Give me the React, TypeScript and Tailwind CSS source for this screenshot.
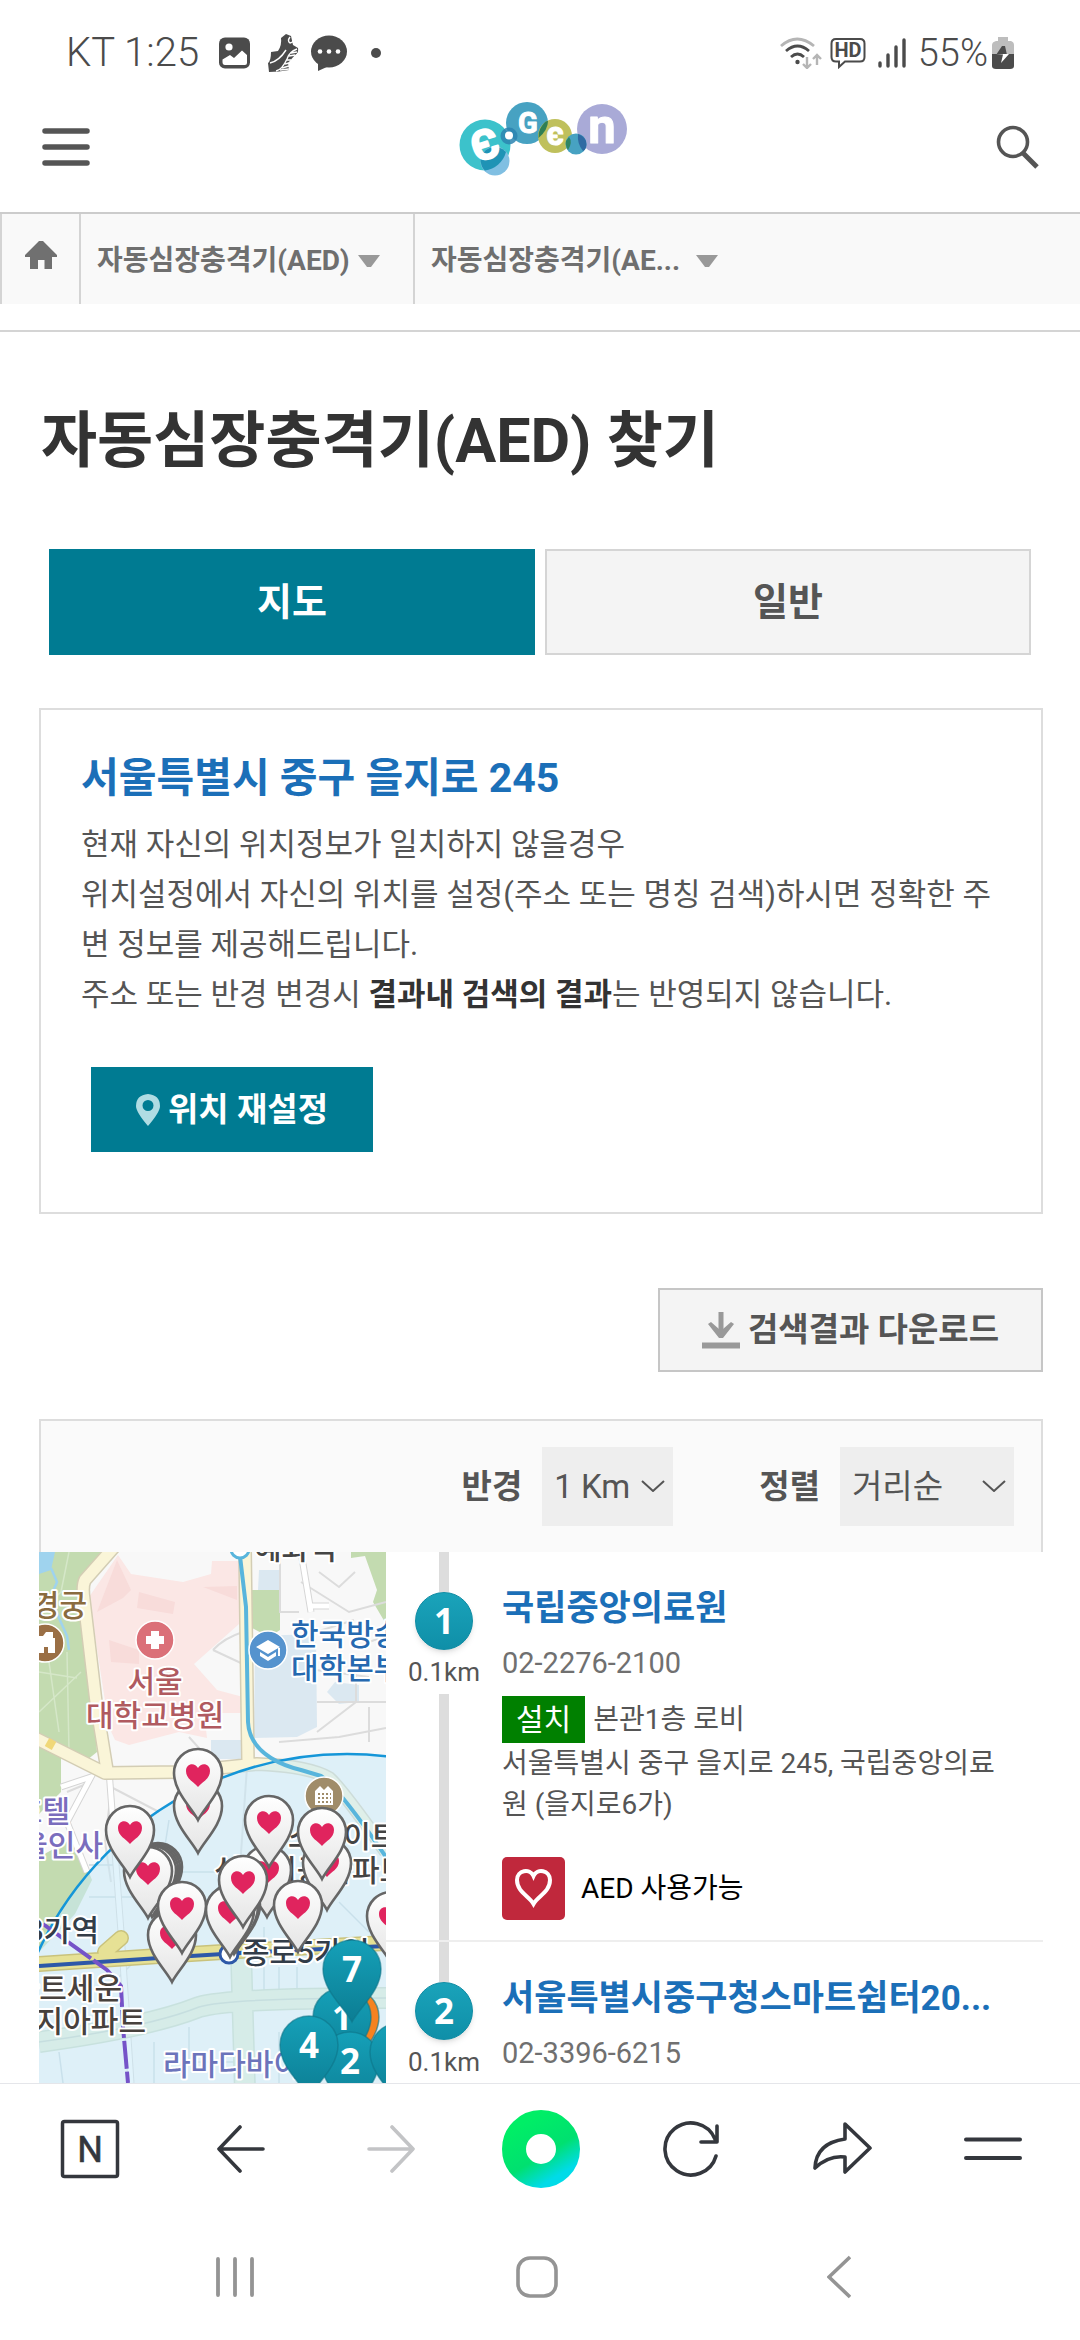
import type { ReactNode } from "react";

interface IPin {
  x: number;
  y: number;
}

interface INumberPin extends IPin {
  label: string;
  color?: string;
}

interface IPlace {
  no: number;
  distance: string;
  name: string;
  phone: string;
  spot: string;
  address: string;
}

const places: IPlace[] = [
  {
    no: 1,
    distance: "0.1km",
    name: "국립중앙의료원",
    phone: "02-2276-2100",
    spot: "본관1층 로비",
    address: "서울특별시 중구 을지로 245, 국립중앙의료원 (을지로6가)",
  },
  {
    no: 2,
    distance: "0.1km",
    name: "서울특별시중구청스마트쉼터20...",
    phone: "02-3396-6215",
    spot: "스마트쉼터",
    address: "서울특별시 중구 을지로",
  },
];

// x, y is the tip of each pin
const heartPins: IPin[] = [
  { x: 159, y: 301 },
  { x: 159, y: 268 },
  { x: 119, y: 362 },
  { x: 117, y: 363 },
  { x: 115, y: 364 },
  { x: 113, y: 365 },
  { x: 109, y: 366 },
  { x: 91, y: 325 },
  { x: 133, y: 430 },
  { x: 143, y: 401 },
  { x: 228, y: 365 },
  { x: 230, y: 315 },
  { x: 197, y: 400 },
  { x: 195, y: 402 },
  { x: 191, y: 405 },
  { x: 204, y: 375 },
  { x: 288, y: 358 },
  { x: 283, y: 327 },
  { x: 259, y: 400 },
  { x: 352, y: 411 },
];

const numberPins: INumberPin[] = [
  { x: 311, y: 518, label: "", color: "#f58220" },
  { x: 303, y: 518, label: "1" },
  { x: 313, y: 470, label: "7" },
  { x: 311, y: 562, label: "2" },
  { x: 360, y: 553, label: "3" },
  { x: 270, y: 546, label: "4" },
];

const StatusBar = () => {
  return (
    <div className="flex h-[94px] items-center justify-between pt-3 pr-[66px] pl-[66px] text-[#4b4b4b]">
      <div className="flex items-center">
        <span className="text-[40px] leading-10 font-light">KT 1:25</span>
        <svg className="ml-5 h-8 w-8" viewBox="0 0 32 32">
          <rect width="31" height="31" y="0.5" rx="6" fill="currentColor" />
          <circle cx="10" cy="10" r="3.6" fill="#fff" />
          <path d="M3.500 22.500 L11 18 L15 21 L23 13.500 L28 18 V26 Q28 28 26 28 H6 Q3.500 28 3.500 25 Z" fill="#fff" />
        </svg>
        <svg className="ml-4 h-10 w-8" viewBox="0 0 32 40">
          <path d="M14 5 L19 1 L24 3 L26 12 L31 15 Q32 20 28 22 L21 30 L22 37 Q12 39 2 39 L1 30 Q4 28 4 19 L11 18 Q15 12 14 5 Z" fill="currentColor" />
          <path d="M30 16 Q22 19 20 26 Q15 37 9 38 M26 4 Q28 9 23 10 Q20 8 23 4 M3 30 Q12 28 19 17" fill="none" stroke="#fff" strokeWidth="1.400" />
          <path d="M24 20 L30 19 M22 23 L28 22 M20 27 L24 27 M18 31 L22 30 M15 35 L22 33 M13 37 L22 36" stroke="#fff" strokeWidth="1.600" />
        </svg>
        <svg className="ml-3 h-9 w-9" viewBox="0 0 36 36">
          <ellipse cx="18" cy="16.500" rx="18" ry="16" fill="currentColor" />
          <path d="M7 27 L7 36 L18 31 Z" fill="currentColor" />
          <circle cx="9" cy="16.500" r="2.300" fill="#fff" />
          <circle cx="18" cy="16.500" r="2.300" fill="#fff" />
          <circle cx="27" cy="16.500" r="2.300" fill="#fff" />
        </svg>
        <span className="ml-6 h-[10px] w-[10px] rounded-full bg-[#4b4b4b]" />
      </div>
      <div className="flex items-center">
        <svg className="h-8 w-[42px]" viewBox="0 0 42 32" fill="none" strokeWidth="2.800">
          <path d="M1 9 Q17 -5 34 9" stroke="#b5b5b5" />
          <path d="M6 14 Q17.500 4 29 14" stroke="currentColor" />
          <path d="M11 20 Q17.500 14 24 20" stroke="currentColor" />
          <circle cx="17.500" cy="25" r="2.200" fill="currentColor" />
          <path d="M27 20 V30 M23 27 L27 31 L31 27 M37 28 V18 M33 22 L37 18 L41 22" stroke="#b5b5b5" strokeWidth="2.400" />
        </svg>
        <svg className="ml-2 h-8 w-9" viewBox="0 0 36 32">
          <path d="M6 2 H30 Q34.500 2 34.500 6.500 V20 Q34.500 24.500 30 24.500 H15 L9 30 V24.500 H6 Q1.500 24.500 1.500 20 V6.500 Q1.500 2 6 2 Z" fill="none" stroke="currentColor" strokeWidth="2" />
          <text x="18" y="20" textAnchor="middle" fontSize="20" fontWeight="700" fill="currentColor">HD</text>
        </svg>
        <svg className="ml-3 h-8 w-7" viewBox="0 0 28 32" stroke="currentColor" strokeWidth="3.400" strokeLinecap="round">
          <path d="M2 26 V29 M10 18 V29 M18 10 V29 M26 3 V29" />
        </svg>
        <span className="ml-3 text-[38px] leading-10 font-light">55%</span>
        <svg className="ml-1 h-[34px] w-[22px]" viewBox="0 0 22 34">
          <path d="M6 1 H16 V5 H19 Q22 6 22 9 V19 H0 V9 Q0 6 4 5 H6 Z" fill="#bdbdbd" />
          <path d="M0 18 H22 V30 Q22 33 18 33 H4 Q0 33 0 30 Z" fill="currentColor" />
          <path d="M10 10 L4 19 H15 L13 10 Z" fill="currentColor" />
          <path d="M4 18.500 H11 L9 27 L17 18 H11" fill="#fff" />
        </svg>
      </div>
    </div>
  );
};

const Logo = () => {
  return (
    <svg className="h-[94px] w-[168px]" viewBox="0 0 168 94" role="img" aria-label="E-Gen">
      <circle cx="26" cy="45" r="25.500" fill="#3cc2cb" />
      <circle cx="36" cy="61" r="14.500" fill="#80bfe2" />
      <path d="M21.500 61 A14.500 14.500 0 0 1 47 52 A25.500 25.500 0 0 1 26 70.500 Q23 69 21.500 61 Z" fill="#1f93b5" />
      <circle cx="68" cy="23" r="21" fill="#47a2c2" />
      <circle cx="50" cy="36" r="8.500" fill="#2b84b0" fillOpacity="0.850" />
      <circle cx="96" cy="36" r="17" fill="#bfc05c" />
      <path d="M81 29 Q86 20 89 21 Q89 30 79.500 38 Q79 33 81 29 Z" fill="#2f7f55" />
      <circle cx="143" cy="29" r="25" fill="#a9aad7" />
      <circle cx="117" cy="44" r="10.500" fill="#47a2c2" />
      <path d="M119 34 Q128 37 127.500 45 Q127 50 124 51 Q118 44 119 34 Z" fill="#2f6aa3" />
      <path d="M110 37 Q114 42 109 50 Q106 45 107 41 Z" fill="#2f8564" />
      <circle cx="50" cy="35.500" r="4" fill="#fff" />
      <g fill="#fff" stroke="#fff" strokeLinejoin="round" fontFamily="Roboto, sans-serif" fontWeight="700" textAnchor="middle">
        <text x="26" y="59" fontSize="41" strokeWidth="2" transform="rotate(-18 26 45)">Є</text>
        <text x="69" y="33" fontSize="29" strokeWidth="1">G</text>
        <text x="96" y="45" fontSize="33" strokeWidth="1">є</text>
        <text x="143" y="43" fontSize="49" strokeWidth="1">n</text>
      </g>
    </svg>
  );
};

const Header = () => {
  return (
    <header className="flex h-[118px] items-center justify-between pr-10 pb-3 pl-[42px] text-[#555]">
      <button type="button" aria-label="menu">
        <svg className="h-10 w-12" viewBox="0 0 48 40" stroke="currentColor" strokeWidth="5.500" strokeLinecap="round">
          <path d="M3 4 H45 M3 20 H45 M3 36 H45" />
        </svg>
      </button>
      <a href="#home">
        <Logo />
      </a>
      <button type="button" aria-label="search">
        <svg className="h-11 w-11" viewBox="0 0 44 44" fill="none" stroke="currentColor" strokeWidth="3.600">
          <circle cx="17" cy="17" r="14.500" />
          <path d="M27 28 L41 42" strokeWidth="5" />
        </svg>
      </button>
    </header>
  );
};

const Caret = () => (
  <svg className="h-3 w-[22px]" viewBox="0 0 22 12">
    <path d="M0 0 H22 L13 12 H9 Z" fill="#999" />
  </svg>
);

const Breadcrumb = () => {
  return (
    <nav className="flex h-[90px] bg-[#f9f9f9] text-[28px] font-bold text-[#6f6f6f]">
      <a href="#home" aria-label="home" className="flex w-[79px] items-center justify-center border-l-2 border-[#d4d4d4] pb-2">
        <svg className="h-7 w-8" viewBox="0 0 32 28">
          <path d="M14 0 H18 L32 14 V16 H27 V28 H19.500 V19 H13 V28 H5 V16 H0 V14 Z" fill="#707070" />
        </svg>
      </a>
      <button type="button" className="flex w-[334px] items-center gap-2 border-l-2 border-[#d4d4d4] pt-1 pl-4">
        자동심장충격기(AED)
        <Caret />
      </button>
      <button type="button" className="flex items-center gap-4 border-l-2 border-[#d4d4d4] pt-1 pl-4">
        자동심장충격기(AE...
        <Caret />
      </button>
    </nav>
  );
};

const LocationCard = () => {
  return (
    <section className="mt-[53px] border-2 border-[#ddd] px-10 pt-[38px] pb-[60px]">
      <h2 className="text-[41px] leading-[60px] font-bold text-[#1b6fb8]">서울특별시 중구 을지로 245</h2>
      <p className="mt-3 text-[31px] leading-[50px] break-all text-[#555]">
        현재 자신의 위치정보가 일치하지 않을경우
        <br />
        위치설정에서 자신의 위치를 설정(주소 또는 명칭 검색)하시면 정확한 주변 정보를 제공해드립니다.
        <br />
        주소 또는 반경 변경시 <strong className="text-[#333]">결과내 검색의 결과</strong>는 반영되지 않습니다.
      </p>
      <button type="button" className="mt-[47px] ml-[10px] flex h-[85px] items-center gap-2 bg-[#007b92] px-[45px] text-[33px] font-bold text-white">
        <svg className="h-8 w-6" viewBox="0 0 24 32">
          <path fillRule="evenodd" d="M12 0 Q24 1 24 12 Q24 18 12 32 Q0 18 0 12 Q0 1 12 0 Z M12 6 A5.500 5.500 0 1 0 12 17 A5.500 5.500 0 1 0 12 6 Z" fill="#b0dce3" />
        </svg>
        위치 재설정
      </button>
    </section>
  );
};

interface ISelectProps {
  id: string;
  label: string;
  className: string;
  children: ReactNode;
}

const FilterSelect = ({ id, label, className, children }: ISelectProps) => {
  return (
    <div className="flex items-center gap-5">
      <label htmlFor={id} className="text-[33px] font-bold">{label}</label>
      <div className="relative">
        <select id={id} className={`h-[79px] appearance-none bg-[#eee] pl-3 text-[33px] ${className}`}>
          {children}
        </select>
        <svg className="pointer-events-none absolute top-[33px] right-2 h-3 w-6" viewBox="0 0 24 12" fill="none" stroke="#555" strokeWidth="2">
          <path d="M1 1 L12 11 L23 1" />
        </svg>
      </div>
    </div>
  );
};

const HeartPin = ({ x, y }: IPin) => (
  <g transform={`translate(${x} ${y})`}>
    <path d="M0 0 C-6 -12 -24 -28 -24 -47 A24 24 0 0 1 24 -47 C24 -28 6 -12 0 0 Z" fill="url(#pin)" stroke="#666" strokeWidth="2.600" />
    <path d="M0 -33 C-4 -38 -12 -41 -12 -49 C-12 -57 -3 -58 0 -52 C3 -58 12 -57 12 -49 C12 -41 4 -38 0 -33 Z" fill="#e0245e" />
  </g>
);

const NumberPin = ({ x, y, label, color }: INumberPin) => (
  <g transform={`translate(${x} ${y})`}>
    <path d="M0 0 C-7 -14 -29 -31 -29 -53 A29 29 0 0 1 29 -53 C29 -31 7 -14 0 0 Z" fill={color ?? "url(#teal)"} stroke="#0d7489" strokeOpacity="0.600" strokeWidth="1.500" />
    <text y="-40" textAnchor="middle" fontSize="35" fontWeight="700" fill="#fff" fontFamily="Open Sans, sans-serif">{label}</text>
  </g>
);

const MapView = () => {
  return (
    <svg className="h-[531px] w-[347px] shrink-0" viewBox="0 0 347 531" role="img" aria-label="지도">
      <defs>
        <linearGradient id="pin" x1="0" y1="0" x2="0" y2="1">
          <stop offset="0" stopColor="#fff" />
          <stop offset="1" stopColor="#e4e4e4" />
        </linearGradient>
        <linearGradient id="teal" x1="0" y1="0" x2="0" y2="1">
          <stop offset="0" stopColor="#15a0b8" />
          <stop offset="1" stopColor="#0c7d93" />
        </linearGradient>
      </defs>
      <rect width="347" height="531" fill="#f8f8f8" />

      {/* parks and water */}
      <path d="M0 0 H75 L44 33 L58 200 L48 208 L0 185 Z M0 192 L22 204 L22 240 L0 262 Z M0 305 L36 285 L53 328 L36 362 L0 400 Z M212 38 H241 V78 L230 85 L213 76 Z M312 0 H347 V72 L334 50 L338 38 L326 4 L312 6 Z" fill="#c3dbb0" />
      <path d="M0 60 L22 40 L30 0 M0 120 L38 126 M10 110 L20 180 M0 160 L42 120 M28 100 L30 200" stroke="#d5e7c8" strokeWidth="1.500" fill="none" />
      <path d="M0 0 H16 L12 18 L0 22 Z" fill="#9fd3ee" />
      <path d="M12 16 L18 30 L12 44 L20 66 L28 84 L30 98" stroke="#9fd3ee" strokeWidth="2.500" fill="none" />

      {/* blocks */}
      <path d="M79 3 L92 22 L144 30 L172 22 L173 9 H200 V72 L155 112 L178 138 L204 145 V161 H165 L168 186 L140 180 L90 193 L76 188 L70 175 L50 45 Z" fill="#fbe7e5" />
      <path d="M78 8 L92 38 L84 46 L58 60 M100 40 L136 50 L134 62 L98 56 Z M148 50 L156 72 M70 88 L100 98 L100 112 L72 110 M80 150 L110 160 M164 35 L198 34 V48 Z" fill="#f8dcda" />
      <path d="M220 18 H241 V38 H219 Z M216 84 L277 82 L278 175 L258 185 L215 186 Z M172 188 H202 V207 H172 Z M296 130 L320 133 V150 L300 152 L288 140 Z" fill="#dbe8f1" />

      {/* small streets */}
      <g fill="none" stroke="#dcdcdc" strokeWidth="2">
        <path d="M241 0 V60 H260 M277 80 L315 68 M277 118 L330 125 M278 180 L317 150 V115 M278 150 H347 M330 90 L347 84 M262 30 L310 60 L347 50 M240 190 L300 185 L347 176 M330 155 V190 M72 215 V240 L66 290 L72 330 M72 235 L120 260 M28 240 L52 230 M208 215 L200 330 M150 185 L168 205 M174 98 Q185 86 204 80 M174 98 L204 112 M280 20 L300 35 L316 20" />
        <path d="M50 313 H90 M50 345 H110 M130 268 L125 300 L140 320 H200 M215 300 V360 M300 350 L330 380 M225 375 V440 M240 415 V440 M258 415 V440 M300 470 V531 M150 475 V510 H200 M115 490 V531 M20 500 L24 531 M240 480 V531 M78 400 L95 410 L80 425" stroke="#c9d6dc" strokeWidth="1.500" />
      </g>
      <path d="M262 0 L272 60 M272 54 H290 M70 218 L82 380 L92 531 M22 235 L52 225 L28 270 L48 320" fill="none" stroke="#d5d5d5" strokeWidth="7" />
      <path d="M262 0 L272 60 M272 54 H290 M70 218 L82 380 L92 531 M22 235 L52 225 L28 270 L48 320" fill="none" stroke="#fff" strokeWidth="5" />

      {/* main roads */}
      <g fill="none" strokeLinejoin="round">
        <path d="M76 -6 L46 28 Q43 34 45 48 L57 150 L68 218 M-4 186 L66 221 L140 220 L218 212 Q270 214 290 226 Q302 236 347 300 M206 -4 L209 212" stroke="#d3cdb4" strokeWidth="14" />
        <path d="M76 -6 L46 28 Q43 34 45 48 L57 150 L68 218 M-4 186 L66 221 L140 220 L218 212 Q270 214 290 226 Q302 236 347 300 M206 -4 L209 212" stroke="#faf5d8" strokeWidth="11" />
        <path d="M8 190 L15 194" stroke="#f0d878" strokeWidth="9" />
        <path d="M202 400 L206 540 M0 490 Q110 475 160 455 Q190 446 347 446" stroke="#c8d8bf" strokeWidth="22" />
        <path d="M202 400 L206 540 M0 490 Q110 475 160 455 Q190 446 347 446" stroke="#e6efd6" strokeWidth="19" />
        <path d="M0 490 Q110 475 160 455 Q190 446 347 446" stroke="#c3d1c0" strokeWidth="1.500" />
      </g>

      {/* search radius */}
      <circle cx="308" cy="542" r="340" fill="#c9e9f8" fillOpacity="0.550" stroke="#1596d8" strokeWidth="2.500" />

      <g fill="none" strokeLinejoin="round">
        <path d="M0 412 L120 404 L200 399 L347 391 M66 400 L82 386" stroke="#c9c27c" strokeWidth="16" strokeLinecap="round" />
        <path d="M0 412 L120 404 L200 399 L347 391 M66 400 L82 386" stroke="#e6e195" strokeWidth="13" strokeLinecap="round" />
        <path d="M0 414 L120 406 L200 401 L347 394" stroke="#2d58a8" strokeWidth="4" />
        <path d="M201 4 L207 55 L209 170 Q210 192 232 206 Q245 214 262 218 L282 224 Q300 236 347 305" stroke="#58b5dc" strokeWidth="4" />
        <path d="M4 372 L68 418 L82 434 L84 475 L89 531" stroke="#7553c8" strokeWidth="4" strokeDasharray="28 3" />
      </g>
      <circle cx="201" cy="-3" r="9" fill="#fff" stroke="#58b5dc" strokeWidth="3" />
      <circle cx="190" cy="402" r="9" fill="#fff" stroke="#2d58a8" strokeWidth="3" />

      {/* labels */}
      <g fontSize="30" fontWeight="500" stroke="#fff" strokeWidth="4" strokeLinejoin="round" paintOrder="stroke" fontFamily="Noto Sans CJK KR, sans-serif">
        <text x="215" y="7" fill="#444">혜화역</text>
        <text x="48" y="64" textAnchor="end" fill="#8a6b3f">창경궁</text>
        <text x="116" y="140" textAnchor="middle" fill="#b05a60">서울</text>
        <text x="116" y="174" textAnchor="middle" fill="#b05a60">대학교병원</text>
        <text x="252" y="93" fill="#2669b0">한국방송통신</text>
        <text x="252" y="127" fill="#2669b0">대학본부</text>
        <text x="31" y="270" textAnchor="end" fill="#7a6dbd">호텔</text>
        <text x="64" y="304" textAnchor="end" fill="#7a6dbd">서울인사</text>
        <text x="249" y="295" fill="#444">스카이트</text>
        <text x="175" y="329" fill="#444">신성미공아파트</text>
        <text x="60" y="389" textAnchor="end" fill="#333d48">종로3가역</text>
        <text x="203" y="411" fill="#333d48">종로5가역</text>
        <text x="83" y="447" textAnchor="end" fill="#47413d">마트세운</text>
        <text x="107" y="480" textAnchor="end" fill="#47413d">지아파트</text>
        <text x="124" y="523" fill="#6c74bb">라마다바이</text>
      </g>

      {/* poi markers */}
      <g stroke="#fff" strokeWidth="1.500">
        <circle cx="116" cy="88" r="19" fill="#db7078" />
        <circle cx="229" cy="98" r="19" fill="#5593ce" />
        <circle cx="6" cy="91" r="19" fill="#9a6f45" />
        <circle cx="285" cy="244" r="19" fill="#a08c69" />
      </g>
      <path d="M112 79 H120 V84 H125 V92 H120 V97 H112 V92 H107 V84 H112 Z" fill="#fff" />
      <path d="M229 88 L241 95 L229 102 L217 95 Z M221 100 L229 105 L237 100 V104 L229 109 L221 104 Z M239 96 H241 V104 H239 Z" fill="#fff" />
      <path d="M-4 84 H4 L7 80 H14 V86 H16 V101 H9 V95 H5 V101 H-4 Z" fill="#fff" />
      <path d="M276 253 V239 L281 234 L285 238 L289 234 L294 239 V253 Z" fill="#fff" />
      <path d="M279 242 H292 M279 246 H292 M279 250 H292" stroke="#a08c69" strokeWidth="2" strokeDasharray="2 2" />

      {heartPins.map((pin, index) => (
        <HeartPin key={index} {...pin} />
      ))}
      {numberPins.map((pin, index) => (
        <NumberPin key={index} {...pin} />
      ))}
    </svg>
  );
};

const PlaceItem = ({ no, distance, name, phone, spot, address }: IPlace) => {
  return (
    <li className="flex border-b-2 border-[#eee]">
      <div className="flex w-[116px] shrink-0 flex-col items-center text-[26px] text-[#555]">
        <span className="h-10 w-[10px] bg-[#ddd]" />
        <span className="flex h-[58px] w-[58px] items-center justify-center rounded-full border border-[#0f8ba3] bg-linear-to-b from-[#1aa3ba] to-[#0f8fa8] font-['Open_Sans',sans-serif] text-[35px] font-bold text-white shadow-md">
          {no}
        </span>
        <span className="py-1 leading-9">{distance}</span>
        <span className="w-[10px] flex-1 bg-[#ddd]" />
      </div>
      <div className="min-w-0 flex-1 pt-8 pr-10 pb-5 text-[28px] text-[#555]">
        <h3 className="truncate text-[35px] leading-[50px] font-bold">
          <a href={`#place-${no}`} className="text-[#1b6fb8]">{name}</a>
        </h3>
        <p className="mt-2 text-[29px] leading-[42px] text-[#707070]">{phone}</p>
        <p className="mt-3 flex items-center gap-2 leading-[47px]">
          <span className="bg-[#008000] px-[14px] text-[30px] text-white">설치</span>
          {spot}
        </p>
        <p className="leading-[41px] break-all">{address}</p>
        <p className="mt-8 flex items-center gap-4 text-black">
          <svg className="h-[63px] w-[63px]" viewBox="0 0 63 63">
            <rect width="63" height="63" rx="5" fill="#c0283c" />
            <path d="M31.500 47 C27 39 15 35 15 23 C15 13 28 11 31.500 19 C35 11 48 13 48 23 C48 35 36 39 31.500 47 Z" fill="none" stroke="#fff" strokeWidth="4" />
          </svg>
          AED 사용가능
        </p>
      </div>
    </li>
  );
};

const BottomBar = () => {
  return (
    <footer className="relative shrink-0 border-t border-[#e5e6ea] bg-white">
      <div className="grid h-[130px] grid-cols-7 place-items-center pr-3 pl-[15px] text-[#34373d]">
        <button type="button" aria-label="naver home">
          <svg className="h-[60px] w-[60px]" viewBox="0 0 60 60">
            <rect x="2.500" y="2.500" width="55" height="55" rx="2" fill="none" stroke="currentColor" strokeWidth="3.500" />
            <text x="30" y="43" textAnchor="middle" fontSize="36" fontWeight="400" fill="currentColor" stroke="currentColor" strokeWidth="0.600" strokeLinejoin="round">N</text>
          </svg>
        </button>
        <button type="button" aria-label="back">
          <svg className="h-12 w-12" viewBox="0 0 48 48" fill="none" stroke="currentColor" strokeWidth="3.600" strokeLinecap="round" strokeLinejoin="round">
            <path d="M46 24 H2 M23 2 L2 24 L23 46" />
          </svg>
        </button>
        <button type="button" aria-label="forward" disabled className="text-[#c3c4c6]">
          <svg className="h-12 w-12" viewBox="0 0 48 48" fill="none" stroke="currentColor" strokeWidth="3.600" strokeLinecap="round" strokeLinejoin="round">
            <path d="M2 24 H46 M25 2 L46 24 L25 46" />
          </svg>
        </button>
        <button type="button" aria-label="green dot">
          <svg className="h-[78px] w-[78px]" viewBox="0 0 78 78">
            <defs>
              <linearGradient id="dot" x1="0.200" y1="0" x2="0.800" y2="1">
                <stop offset="0" stopColor="#00ee66" />
                <stop offset="0.600" stopColor="#00e070" />
                <stop offset="1" stopColor="#00dbe8" />
              </linearGradient>
            </defs>
            <circle cx="39" cy="39" r="27" fill="none" stroke="url(#dot)" strokeWidth="24" />
          </svg>
        </button>
        <button type="button" aria-label="refresh">
          <svg className="h-[60px] w-[60px]" viewBox="0 0 60 60" fill="none" stroke="currentColor" strokeWidth="3.600" strokeLinecap="round" strokeLinejoin="round">
            <path d="M54 37 A26 26 0 1 1 53 20 M55 7 V23 H39" />
          </svg>
        </button>
        <button type="button" aria-label="share">
          <svg className="h-[60px] w-[60px]" viewBox="0 0 60 60" fill="none" stroke="currentColor" strokeWidth="3.600" strokeLinecap="round" strokeLinejoin="round">
            <path d="M33 5 L58 29 L33 53 V38 Q17 36 3 49 Q4 24 33 20 Z" />
          </svg>
        </button>
        <button type="button" aria-label="more">
          <svg className="h-6 w-[60px]" viewBox="0 0 60 24" stroke="currentColor" strokeWidth="4" strokeLinecap="round">
            <path d="M3 2.500 H57 M3 21 H57" />
          </svg>
        </button>
      </div>
      <div className="grid h-[126px] grid-cols-3 place-items-center pr-[90px] pl-[84px] text-[#949494]">
        <button type="button" aria-label="recents">
          <svg className="h-11 w-10" viewBox="0 0 40 44" stroke="currentColor" strokeWidth="3.800" strokeLinecap="round">
            <path d="M3 4 V40 M20 4 V40 M37 4 V40" />
          </svg>
        </button>
        <button type="button" aria-label="home button">
          <svg className="h-11 w-11" viewBox="0 0 44 44" fill="none" stroke="currentColor" strokeWidth="3.600">
            <rect x="3" y="3" width="38" height="38" rx="12" />
          </svg>
        </button>
        <button type="button" aria-label="system back">
          <svg className="h-11 w-6" viewBox="0 0 24 44" fill="none" stroke="currentColor" strokeWidth="3.600">
            <path d="M23 2 L2 22 L23 42" />
          </svg>
        </button>
      </div>
    </footer>
  );
};

const App = () => {
  return (
    <div className="flex h-screen flex-col overflow-hidden bg-white font-['Roboto','Noto_Sans_CJK_KR',sans-serif]">
      <StatusBar />
      <Header />
      <div className="border-t-2 border-[#ccc]" />
      <Breadcrumb />
      <main className="mt-[26px] min-h-0 flex-1 overflow-hidden border-t-2 border-[#d4d4d4] pr-[37px] pl-[39px]">
        <h1 className="mt-[73px] pl-[2px] text-[61px] leading-[72px] font-bold text-[#333]">자동심장충격기(AED) 찾기</h1>

        {/* tabs */}
        <div className="mt-[72px] grid grid-cols-2 gap-[10px] pr-3 pl-[10px] text-[38px] font-bold">
          <button type="button" className="h-[106px] bg-[#007b92] text-white">지도</button>
          <button type="button" className="h-[106px] border-2 border-[#d5d5d5] bg-[#f4f4f4] text-[#555]">일반</button>
        </div>

        <LocationCard />

        <div className="mt-[74px] flex justify-end">
          <button type="button" className="flex h-[84px] items-center gap-2 border-2 border-[#c6c6c6] bg-[#f4f4f4] px-[42px] text-[33px] font-bold text-[#555]">
            <svg className="h-[38px] w-[38px]" viewBox="0 0 38 38">
              <path d="M19 1 V22" stroke="#999" strokeWidth="5" />
              <path d="M6 13 L9 11 L17 18 H21 L29 11 L32 13 L21 27 H17 Z" fill="#999" />
              <path d="M0 34.500 H38" stroke="#999" strokeWidth="6" />
            </svg>
            검색결과 다운로드
          </button>
        </div>

        {/* filters */}
        <div className="mt-[47px] flex items-center justify-end gap-[86px] border-2 border-b-0 border-[#ddd] bg-[#fafafa] py-[26px] pr-[27px] text-[#555]">
          <FilterSelect id="radius" label="반경" className="w-[131px]">
            <option>1 Km</option>
            <option>3 Km</option>
            <option>5 Km</option>
          </FilterSelect>
          <FilterSelect id="sort" label="정렬" className="w-[174px]">
            <option>거리순</option>
            <option>이름순</option>
          </FilterSelect>
        </div>

        <div className="flex items-start">
          <MapView />
          <ul className="min-w-0 flex-1">
            {places.map((place) => (
              <PlaceItem key={place.no} {...place} />
            ))}
          </ul>
        </div>
      </main>
      <BottomBar />
    </div>
  );
};

export default App;
